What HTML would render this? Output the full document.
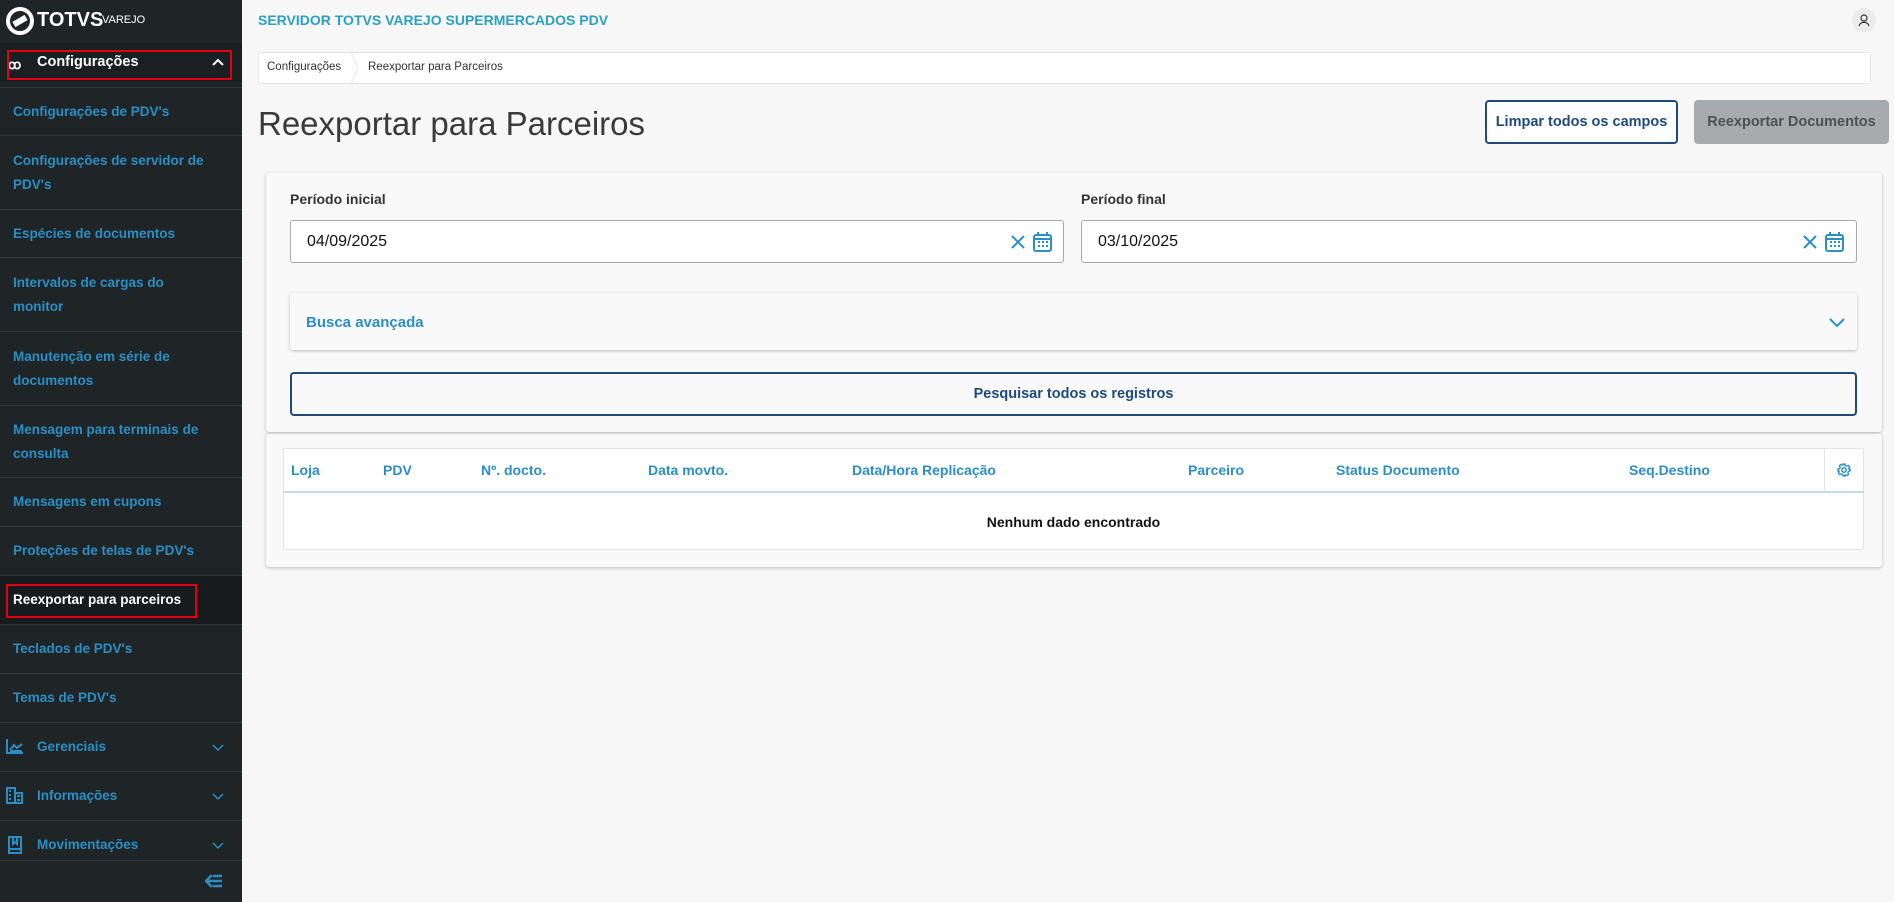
<!DOCTYPE html>
<html><head><meta charset="utf-8"><style>
*{box-sizing:border-box;margin:0;padding:0}
body{width:1894px;height:902px;overflow:hidden;background:#f7f7f7;font-family:"Liberation Sans",sans-serif;position:relative}
.sb{position:absolute;left:0;top:0;width:242px;height:902px;background:#1f2527}
.abs{position:absolute}
.it{position:absolute;left:0;width:242px;border-top:1px solid #2f383b;color:#2b8ec4;font-size:13.5px;font-weight:bold;padding-left:13px;display:flex;align-items:center;line-height:24px}
.red{position:absolute;border:2px solid #e3000f}
.th{position:absolute;top:462px;font-size:14px;font-weight:bold;color:#2b8ec4}
</style></head><body>
<div class="sb">
 <svg class="abs" style="left:6px;top:7px" width="28" height="28" viewBox="0 0 28 28"><circle cx="14" cy="14" r="12" fill="none" stroke="#fff" stroke-width="4"/><path d="M7 11h14v6H7z" fill="#fff" transform="rotate(-30 14 14)"/></svg>
 <div class="abs" style="left:37px;top:9px;color:#fff;font-size:20px;font-weight:bold;letter-spacing:0px">TOTVS</div>
 <div class="abs" style="left:102px;top:14px;color:#fff;font-size:11px">VAREJO</div>
 <div class="abs" style="left:0;top:43px;width:242px;height:39px;background:#1a1f21"></div>
 <div class="abs" style="left:8px;top:57px;color:#fff;font-size:13px;font-weight:bold">ꝏ</div>
 <div class="abs" style="left:37px;top:54px;color:#fff;font-size:14.5px;font-weight:bold">Configurações</div>
 <svg class="abs" style="left:212px;top:58px" width="12" height="8"><path d="M1 7l5-5 5 5" fill="none" stroke="#fff" stroke-width="2"/></svg>
 <div class="red" style="left:7px;top:50px;width:225px;height:30px"></div>
 <div class="it" style="top:87px;height:48px">Configurações de PDV's</div>
 <div class="it" style="top:135px;height:74px">Configurações de servidor de<br>PDV's</div>
 <div class="it" style="top:209px;height:48px">Espécies de documentos</div>
 <div class="it" style="top:257px;height:74px">Intervalos de cargas do<br>monitor</div>
 <div class="it" style="top:331px;height:74px">Manutenção em série de<br>documentos</div>
 <div class="it" style="top:405px;height:72px">Mensagem para terminais de<br>consulta</div>
 <div class="it" style="top:477px;height:49px">Mensagens em cupons</div>
 <div class="it" style="top:526px;height:49px">Proteções de telas de PDV's</div>
 <div class="it" style="top:575px;height:49px;background:#171b1d;color:#fff">Reexportar para parceiros</div>
 <div class="red" style="left:6px;top:584px;width:191px;height:34px"></div>
 <div class="it" style="top:624px;height:49px">Teclados de PDV's</div>
 <div class="it" style="top:673px;height:49px">Temas de PDV's</div>
 <div class="it" style="top:722px;height:49px;padding-left:37px">Gerenciais</div>
 <div class="it" style="top:771px;height:49px;padding-left:37px">Informações</div>
 <div class="it" style="top:820px;height:49px;padding-left:37px">Movimentações</div>
 <svg class="abs" style="left:6px;top:738px" width="18" height="16"><path d="M1 1v14h16M4 12l4-5 3 3 5-4M4 13h12" fill="none" stroke="#2b8ec4" stroke-width="2"/></svg>
 <svg class="abs" style="left:6px;top:787px" width="18" height="17"><path d="M1 1h8v15H1zM9 6h7v10H9M3 4h2M3 8h2M3 12h2M11 9h3M11 13h3" fill="none" stroke="#2b8ec4" stroke-width="2"/></svg>
 <svg class="abs" style="left:8px;top:836px" width="14" height="18"><path d="M1 1h12v16H1zM5 1v7l2-2 2 2V1M1 13h12" fill="none" stroke="#2b8ec4" stroke-width="2"/></svg>
 <svg class="abs" style="left:212px;top:744px" width="12" height="8"><path d="M1 1l5 5 5-5" fill="none" stroke="#2b8ec4" stroke-width="1.5"/></svg>
 <svg class="abs" style="left:212px;top:793px" width="12" height="8"><path d="M1 1l5 5 5-5" fill="none" stroke="#2b8ec4" stroke-width="1.5"/></svg>
 <svg class="abs" style="left:212px;top:842px" width="12" height="8"><path d="M1 1l5 5 5-5" fill="none" stroke="#2b8ec4" stroke-width="1.5"/></svg>
 <div class="abs" style="left:0;top:860px;width:242px;height:42px;background:#1f2527;border-top:1px solid #2f383b"></div>
 <svg class="abs" style="left:205px;top:874px" width="18" height="14"><path d="M7 1L1 7l6 6M1 7h16M8 2h9M8 12h9" fill="none" stroke="#2b8ec4" stroke-width="2.5"/></svg>
</div>

<div class="abs" style="left:258px;top:12px;color:#2ba0c3;font-size:14px;font-weight:bold">SERVIDOR TOTVS VAREJO SUPERMERCADOS PDV</div>
<div class="abs" style="left:1852px;top:8px;width:24px;height:24px;border-radius:50%;background:#ececec"></div>
<svg class="abs" style="left:1858px;top:13px" width="12" height="14"><circle cx="6" cy="5" r="3" fill="none" stroke="#333" stroke-width="1.2"/><path d="M1 13c1-5 9-5 10 0" fill="none" stroke="#333" stroke-width="1.2"/></svg>

<div class="abs" style="left:258px;top:52px;width:1613px;height:32px;background:#fff;border:1px solid #e4e4e4;border-radius:3px"></div>
<div class="abs" style="left:267px;top:61px;font-size:11.5px;color:#333">Configurações</div>
<svg class="abs" style="left:350px;top:52px" width="10" height="32"><path d="M1 0l7 16-7 16" fill="none" stroke="#e6e6e6"/></svg>
<div class="abs" style="left:368px;top:61px;font-size:11.5px;color:#333">Reexportar para Parceiros</div>

<div class="abs" style="left:258px;top:105px;font-size:33px;color:#3a3a3a">Reexportar para Parceiros</div>
<div class="abs" style="left:1485px;top:100px;width:193px;height:44px;border:2px solid #1e4a7c;border-radius:4px;background:#fff;color:#1e4a7c;font-size:14.5px;font-weight:bold;display:flex;align-items:center;justify-content:center">Limpar todos os campos</div>
<div class="abs" style="left:1694px;top:100px;width:195px;height:44px;border-radius:4px;background:#a7abae;color:#4b5256;font-size:14.5px;font-weight:bold;display:flex;align-items:center;justify-content:center">Reexportar Documentos</div>

<div class="abs" style="left:266px;top:173px;width:1616px;height:259px;background:#f9f9f9;border-radius:3px;box-shadow:0 1px 3px rgba(0,0,0,.25)"></div>
<div class="abs" style="left:290px;top:191px;font-size:14px;font-weight:bold;color:#333">Período inicial</div>
<div class="abs" style="left:1081px;top:191px;font-size:14px;font-weight:bold;color:#333">Período final</div>
<div class="abs" style="left:290px;top:220px;width:774px;height:43px;background:#fff;border:1px solid #a9a9a9;border-radius:3px;font-size:16px;color:#111;padding:12px 0 0 16px">04/09/2025</div>
<div class="abs" style="left:1081px;top:220px;width:776px;height:43px;background:#fff;border:1px solid #a9a9a9;border-radius:3px;font-size:16px;color:#111;padding:12px 0 0 16px">03/10/2025</div>
<svg class="abs" style="left:1011px;top:235px" width="14" height="14"><path d="M1 1l12 12M13 1L1 13" stroke="#2b8ec4" stroke-width="2"/></svg>
<svg class="abs" style="left:1033px;top:231px" width="19" height="21"><rect x="1" y="4" width="17" height="16" rx="2" fill="none" stroke="#2b8ec4" stroke-width="2"/><path d="M1 8h17M5 1v4M14 1v4" stroke="#2b8ec4" stroke-width="2"/><path d="M5 11h2M9 11h2M13 11h2M5 15h2M9 15h2M13 15h2" stroke="#2b8ec4" stroke-width="2"/></svg>
<svg class="abs" style="left:1803px;top:235px" width="14" height="14"><path d="M1 1l12 12M13 1L1 13" stroke="#2b8ec4" stroke-width="2"/></svg>
<svg class="abs" style="left:1825px;top:231px" width="19" height="21"><rect x="1" y="4" width="17" height="16" rx="2" fill="none" stroke="#2b8ec4" stroke-width="2"/><path d="M1 8h17M5 1v4M14 1v4" stroke="#2b8ec4" stroke-width="2"/><path d="M5 11h2M9 11h2M13 11h2M5 15h2M9 15h2M13 15h2" stroke="#2b8ec4" stroke-width="2"/></svg>

<div class="abs" style="left:290px;top:293px;width:1567px;height:57px;background:#f9f9f9;border-radius:3px;box-shadow:0 1px 3px rgba(0,0,0,.25)"></div>
<div class="abs" style="left:306px;top:314px;font-size:15px;font-weight:bold;color:#2b8ec4">Busca avançada</div>
<svg class="abs" style="left:1829px;top:318px" width="16" height="10"><path d="M1 1l7 7 7-7" fill="none" stroke="#2b8ec4" stroke-width="2"/></svg>

<div class="abs" style="left:290px;top:372px;width:1567px;height:44px;border:2px solid #1e4a7c;border-radius:4px;color:#1e4a7c;font-size:14.5px;font-weight:bold;display:flex;align-items:center;justify-content:center">Pesquisar todos os registros</div>

<div class="abs" style="left:266px;top:434px;width:1616px;height:133px;background:#f9f9f9;border-radius:3px;box-shadow:0 1px 3px rgba(0,0,0,.25)"></div>
<div class="abs" style="left:283px;top:448px;width:1581px;height:102px;background:#fff;border:1px solid #e4e4e4;border-radius:2px"></div>
<div class="abs" style="left:283px;top:491px;width:1581px;height:2px;background:#bfe0ea"></div>
<div class="abs" style="left:1824px;top:449px;width:1px;height:42px;background:#e4e4e4"></div>
<div class="th" style="left:291px">Loja</div>
<div class="th" style="left:383px">PDV</div>
<div class="th" style="left:481px">Nº. docto.</div>
<div class="th" style="left:648px">Data movto.</div>
<div class="th" style="left:852px">Data/Hora Replicação</div>
<div class="th" style="left:1188px">Parceiro</div>
<div class="th" style="left:1336px">Status Documento</div>
<div class="th" style="left:1629px">Seq.Destino</div>
<svg class="abs" style="left:1837px;top:463px" width="14" height="14" viewBox="0 0 14 14"><circle cx="7" cy="7" r="2.2" fill="none" stroke="#2b8ec4" stroke-width="1.5"/><path d="M6 1h2l.4 1.6 1.4.6 1.4-.9 1.4 1.4-.9 1.4.6 1.4L13 6v2l-1.6.4-.6 1.4.9 1.4-1.4 1.4-1.4-.9-1.4.6L8 13H6l-.4-1.6-1.4-.6-1.4.9-1.4-1.4.9-1.4-.6-1.4L1 8V6l1.6-.4.6-1.4-.9-1.4 1.4-1.4 1.4.9 1.4-.6z" fill="none" stroke="#2b8ec4" stroke-width="1.3"/></svg>
<div class="abs" style="left:283px;top:514px;width:1581px;text-align:center;font-size:14px;font-weight:bold;color:#111">Nenhum dado encontrado</div>
</body></html>
